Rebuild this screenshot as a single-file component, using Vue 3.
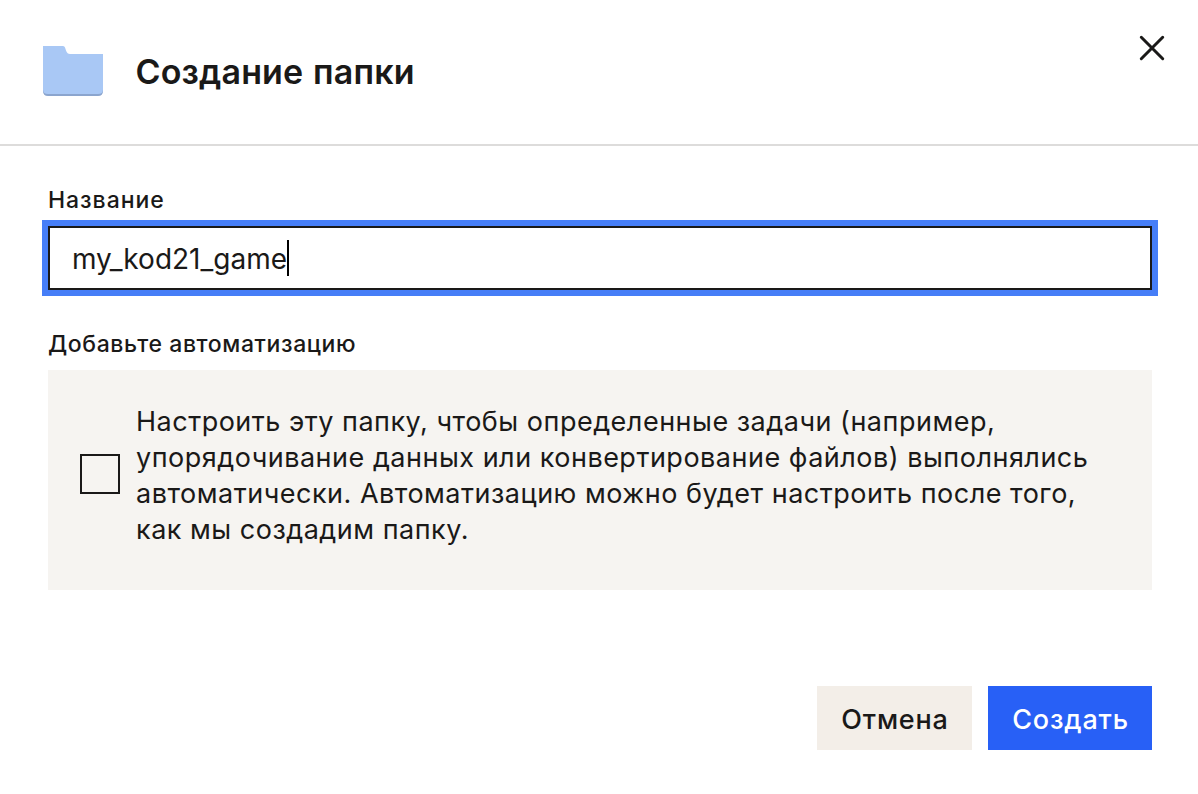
<template>
  <div class="modal">
    <header class="modal-header">
      <svg class="folder-icon" width="60" height="50" viewBox="0 0 60 50">
        <path d="M0 8V45Q0 50 5 50H55Q60 50 60 45V10H0Z" fill="#8ba5ce" />
        <path d="M0 0H20Q21.500 0 22 1.600L23 4.500Q24.200 8 27 8H60V43.500Q60 48 55 48H5Q0 48 0 43.500Z" fill="#a9c8f5" />
      </svg>
      <h1 class="modal-title">Создание папки</h1>
      <button class="btn-close" aria-label="Закрыть">
        <svg width="26" height="26" viewBox="0 0 26 26">
          <path d="M2.300 2.300L23.700 23.700M23.700 2.300L2.300 23.700" fill="none" stroke="#1a1918" stroke-width="3" stroke-linecap="round" />
        </svg>
      </button>
    </header>

    <main class="modal-body">
      <label class="field-label label-name">Название</label>
      <div class="name-input">
        <span class="name-value">{{ folderName }}</span><i class="caret"></i>
      </div>

      <div class="field-label label-auto">Добавьте автоматизацию</div>
      <div class="auto-card" @click="automate = !automate">
        <span class="checkbox" role="checkbox" :aria-checked="automate"></span>
        <p class="auto-text">
          <span v-for="(line, i) in description" :key="i">{{ line }}</span>
        </p>
      </div>
    </main>

    <footer class="modal-footer">
      <button class="btn btn-cancel">Отмена</button>
      <button class="btn btn-create">Создать</button>
    </footer>
  </div>
</template>

<script setup>
import { ref } from 'vue'

const folderName = ref('my_kod21_game')
const automate = ref(false)

const description = [
  'Настроить эту папку, чтобы определенные задачи (например,',
  'упорядочивание данных или конвертирование файлов) выполнялись',
  'автоматически. Автоматизацию можно будет настроить после того,',
  'как мы создадим папку.',
]
</script>

<style>
body { background: #fff; }
</style>

<style scoped>
.modal { box-sizing: border-box; width: 1198px; height: 794px; background: #fff; color: #1a1918; font-family: Inter, "Liberation Sans", sans-serif; overflow: hidden; }

.modal-header { box-sizing: border-box; height: 146px; display: flex; align-items: flex-start; padding: 46px 33px 0 43px; border-bottom: 2px solid #dddcdb; }
.folder-icon { flex-shrink: 0; }
.modal-title { margin: 6px 0 0 32.5px; font-size: 34px; line-height: 40px; font-weight: 600; letter-spacing: 0.15px; word-spacing: 1px; white-space: nowrap; }
.btn-close { margin: -11px 0 0 auto; padding: 0; border: none; background: none; line-height: 0; cursor: pointer; }

.modal-body { padding: 38px 46px 0 48px; }
.field-label { display: block; font-size: 23px; line-height: 32px; font-weight: 500; letter-spacing: 0.6px; white-space: nowrap; }
.label-name { letter-spacing: 0.95px; }
.name-input { box-sizing: border-box; height: 64px; margin-top: 10px; padding: 0 22px; display: flex; align-items: center; border: 2px solid #1a1918; box-shadow: 0 0 0 6px #467ef7; background: #fff; }
.name-value { padding-top: 2px; font-size: 28px; line-height: 34px; white-space: nowrap; }
.caret { width: 2px; height: 36px; background: #000; }
.label-auto { margin-top: 38px; }

/* 自动化选项卡片 */
.auto-card { box-sizing: border-box; height: 220px; margin-top: 10px; padding: 34px 32px 0; display: flex; background: #f6f4f1; }
.checkbox { box-sizing: border-box; width: 40px; height: 40px; margin: 50px 16px 0 0; border: 2px solid #1a1918; flex-shrink: 0; }
.auto-text { margin: 0; font-size: 27px; line-height: 36px; letter-spacing: 0.5px; white-space: nowrap; }
.auto-text span { display: block; }

.modal-footer { display: flex; justify-content: flex-end; gap: 16px; padding: 96px 46px 0 0; }
.btn { width: 155px; height: 64px; padding: 2px 0 0 1px; border: none; font-family: inherit; font-size: 27px; font-weight: 500; letter-spacing: 0.8px; cursor: pointer; }
.btn-cancel { background: #f3eee8; color: #1a1918; }
.btn-create { width: 164px; background: #2860f6; color: #fff; }
</style>
